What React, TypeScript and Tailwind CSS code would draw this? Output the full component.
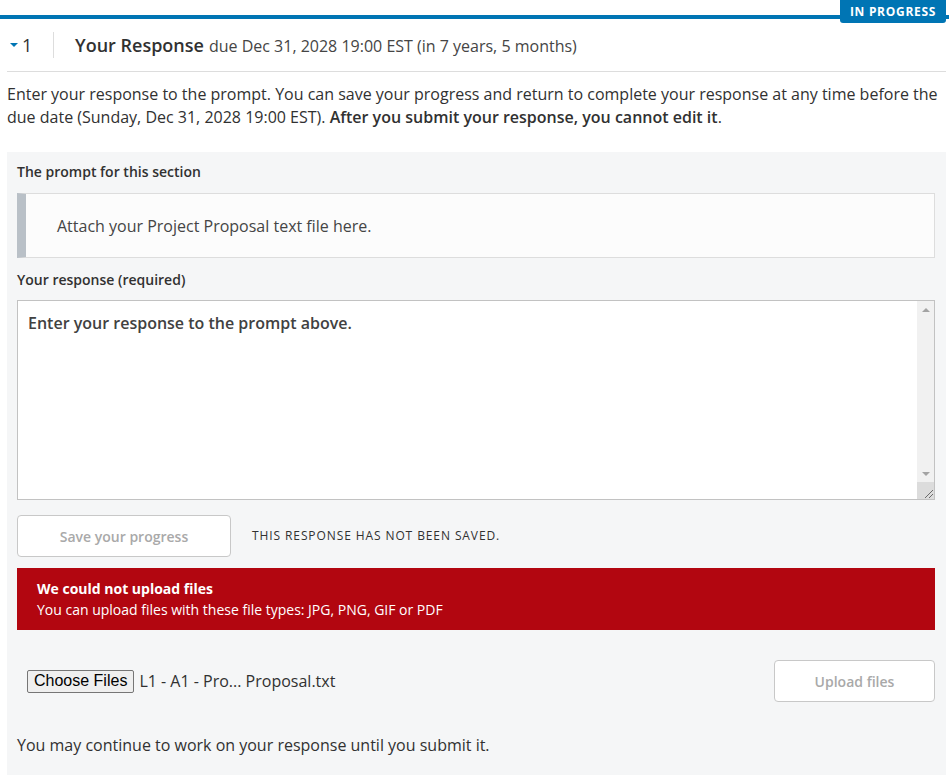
import React from "react";

function Scrollbar() {
  return (
    <div className="absolute right-0 top-0 bottom-0 flex w-[17px] flex-col bg-[#f1f1f1]">
      <div className="flex h-[17px] items-center justify-center">
        <div className="h-0 w-0 border-x-[4px] border-b-[4px] border-x-transparent border-b-[#a3a3a3]" />
      </div>
      <div className="flex-1" />
      <div className="flex h-[17px] items-center justify-center">
        <div className="h-0 w-0 border-x-[4px] border-t-[4px] border-x-transparent border-t-[#a3a3a3]" />
      </div>
      <div className="relative h-[17px] bg-[#dcdcdc]">
        <svg className="absolute bottom-[1px] right-[1px]" width="10" height="10" viewBox="0 0 10 10">
          <line x1="2" y1="10" x2="10" y2="2" stroke="#6b6b6b" strokeWidth="1" />
          <line x1="6" y1="10" x2="10" y2="6" stroke="#6b6b6b" strokeWidth="1" />
        </svg>
      </div>
    </div>
  );
}

export default function App() {
  return (
    <div className="min-h-[775px] bg-white pl-[7px] pr-[3px] text-[#313131]" style={{ fontFamily: '"Open Sans", sans-serif' }}>
      {/* top bar + status badge */}
      <div className="relative h-[19px]">
        <div className="absolute inset-x-[-7px] bottom-0 h-[4px] bg-[#0075b4]" />
        <div className="absolute right-0 top-0 flex h-[23px] w-[106px] items-center justify-center rounded-b-[3px] bg-[#0075b4] text-[12px] font-bold tracking-[0.7px] text-white">
          IN PROGRESS
        </div>
      </div>

      {/* header */}
      <div className="flex h-[53px] items-center border-b border-[#dddddd]">
        <div className="flex w-[46px] items-center pl-[3px]">
          <div className="h-0 w-0 border-x-[4px] border-t-[4px] border-x-transparent border-t-[#0075b4]" />
          <span className="ml-[4px] text-[18px] leading-none">1</span>
        </div>
        <div className="h-[26px] w-px bg-[#dddddd]" />
        <div className="ml-[21px] flex items-baseline">
          <span className="text-[18px] font-semibold">Your Response</span>
          <span className="ml-[5px] text-[16px] text-[#454545]">due Dec 31, 2028 19:00 EST (in 7 years, 5 months)</span>
        </div>
      </div>

      <p className="mt-[11px] text-[16px] leading-[23px]">
        Enter your response to the prompt. You can save your progress and return to complete your response at any time before the due date (Sunday, Dec 31, 2028 19:00 EST). <strong className="font-semibold">After you submit your response, you cannot edit it</strong>.
      </p>

      {/* form panel */}
      <div className="mt-[23px] bg-[#f5f6f7] pb-[20px] pl-[10px] pr-[11px] pt-[10px]">
        <div className="text-[14px] font-semibold leading-[20px]">The prompt for this section</div>
        <div className="mt-[11px] flex h-[65px] items-center border border-l-[9px] border-[#dddddd] border-l-[#b9c0c7] bg-[#fcfcfc] pl-[31px] text-[16px] text-[#454545]">
          Attach your Project Proposal text file here.
        </div>

        <div className="mt-[12px] text-[14px] font-semibold leading-[20px]">Your response (required)</div>
        <div className="relative mt-[10px] h-[200px] border border-[#c2c2c2] bg-white">
          <div className="px-[10px] pt-[10px] text-[16px] font-semibold leading-[24px] text-[#414141]">
            Enter your response to the prompt above.
          </div>
          <Scrollbar />
        </div>

        <div className="mt-[15px] flex items-center">
          <button className="h-[42px] w-[214px] rounded-[4px] border border-[#c8c8c8] bg-white text-[14px] font-semibold text-[#a9a9a9]">
            Save your progress
          </button>
          <span className="ml-[21px] text-[12px] tracking-[0.9px] text-[#313131]">THIS RESPONSE HAS NOT BEEN SAVED.</span>
        </div>

        <div className="mt-[11px] bg-[#b20610] px-[20px] py-[10px] text-[14px] leading-[21px] text-white">
          <div className="font-bold">We could not upload files</div>
          <div>You can upload files with these file types: JPG, PNG, GIF or PDF</div>
        </div>

        <div className="mt-[30px] flex h-[42px] items-center justify-between">
          <div className="ml-[10px] flex items-center">
            <span
              className="flex h-[23px] items-center rounded-[2px] border border-[#767676] bg-[#efefef] px-[6px] text-[16px] text-black"
              style={{ fontFamily: '"Liberation Sans", Arial, sans-serif' }}
            >
              Choose Files
            </span>
            <span className="ml-[5px] text-[16px]">L1 - A1 - Pro... Proposal.txt</span>
          </div>
          <button className="h-[42px] w-[161px] rounded-[4px] border border-[#c8c8c8] bg-white text-[14px] font-semibold text-[#a9a9a9]">
            Upload files
          </button>
        </div>

        <p className="mt-[31px] text-[16px] leading-[24px]">You may continue to work on your response until you submit it.</p>
      </div>
    </div>
  );
}
